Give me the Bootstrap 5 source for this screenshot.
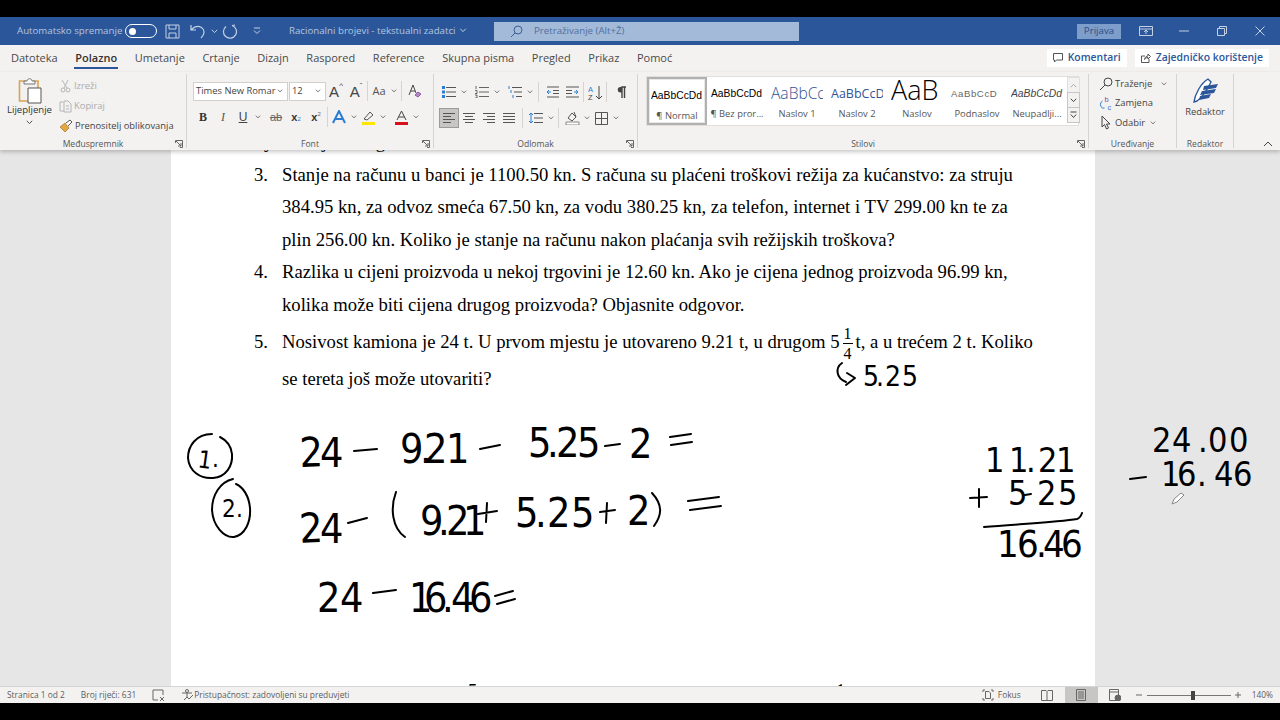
<!DOCTYPE html>
<html lang="hr">
  <head>
    <meta charset="UTF-8" />
    <meta name="viewport" content="width=device-width, initial-scale=1.0" />
    <title>Racionalni brojevi - tekstualni zadatci</title>
    <link
      href="https://cdn.jsdelivr.net/npm/bootstrap@5.3.0/dist/css/bootstrap.min.css"
      rel="stylesheet"
    />
    <style>
      html, body { height: 720px; overflow: hidden; }
      body {
        background: #000;
        font-family: "Open Sans", "Liberation Sans", sans-serif;
        font-size: 10px;
        color: #444;
      }
      svg { display: block; flex: none; }
      .frame { width: 1280px; height: 720px; padding: 17px 0; }

      /* title bar */
      .title-bar { height: 28px; background: #2b579a; color: #b4c5df; font-size: 9.7px; flex: none; white-space: nowrap; }
      .title-bar svg { stroke: #c3d0e5; fill: none; }
      .autosave { margin-left: 17px; width: 108px; }
      .toggle-pill { width: 32px; height: 14px; border: 1px solid #fff; border-radius: 8px; padding: 2px 3px; }
      .toggle-dot { width: 7px; height: 7px; background: #fff; border-radius: 50%; }
      .undo-ico { margin-left: 10px; }
      .doc-name { margin-left: 28px; width: 205px; }
      .search-box { width: 305px; height: 19px; background: #a4bad9; color: #4f6f9e; padding-left: 16px; gap: 11px; }
      .search-box svg { stroke: #3c5f96; }
      .signin { width: 44px; height: 15px; background: #7d9dcb; color: #2b4f86; margin-left: 278px; }
      .win-btn { width: 38px; }
      .win-first { margin-left: 6px; }

      /* tabs */
      .tab-row { height: 27px; background: #f3f2f1; flex: none; font-size: 11px; padding-left: 11px; color: #4a4a4a; }
      .tab-item { margin-right: 17.6px; height: 27px; padding-top: 5px; position: relative; }
      .tab-on { font-weight: 600; color: #333; }
      .tab-on::after { content: ""; position: absolute; left: -1px; right: -1px; top: 22px; height: 2px; background: #2b579a; }
      .share-wrap { margin-right: 11px; }
      .share-btn { height: 18px; background: #fff; color: #2b579a; font-weight: 600; font-size: 10.4px; padding: 0 6px; gap: 5px; }
      .share-btn svg { stroke: #555; fill: none; }

      /* ribbon */
      .ribbon { height: 78px; background: #f3f2f1; flex: none; position: relative; z-index: 2; box-shadow: 0 2px 4px rgba(0,0,0,.22); }
      .rb-group { height: 74px; margin-top: 2px; border-right: 1px solid #d6d4d2; position: relative; }
      .rb-body { height: 65px; }
      .rb-label { height: 11px; line-height: 11px; text-align: center; font-size: 8.6px; color: #555; }
      .launcher { position: absolute; right: 3px; bottom: 0; }
      .g-clip { width: 187px; }
      .g-font { width: 247px; }
      .g-para { width: 204px; }
      .g-style { width: 451px; }
      .g-edit { width: 88px; }
      .g-edit2 { width: 57px; }
      .rb-collapse { position: absolute; right: 7px; bottom: 3px; }
      .rb-btn { height: 20px; width: 20px; display: flex; align-items: center; justify-content: center; flex: none; color: #333; }
      .rb-btn svg { stroke: #555; fill: none; }
      .rb-cv { height: 20px; width: 9px; display: flex; align-items: center; justify-content: center; flex: none; }
      .rb-cv svg { stroke: #555; fill: none; }
      .rb-sep { width: 1px; height: 20px; background: #d6d4d2; flex: none; margin: 0 3px; }
      .rb-sep-tight { margin: 0 1px; }
      .rb-active { background: #c8c6c4; border: 1px solid #9b9b9b; }

      .paste-col { width: 59px; padding-top: 4px; color: #333; font-size: 9.6px; line-height: 12px; }
      .clip-row { height: 20px; gap: 2px; white-space: nowrap; font-size: 9.4px; }
      .clip-off { color: #ababab; }
      .clip-on { color: #444; }
      .clip-col { padding-top: 2px; }

      .font-rows { padding: 7px 0 0 6px; }
      .pick { height: 19px; background: #fff; border: 1px solid #d2d0ce; color: #444; padding-left: 2px; font-size: 9.4px; white-space: nowrap; overflow: hidden; }
      .pick svg { stroke: #555; fill: none; }
      .pick-font { width: 95px; margin-right: 1px; }
      .pick-size { width: 37px; }
      .row-two { margin-top: 6px; }
      .big-bold { font-family: "Liberation Serif", serif; font-weight: 700; font-size: 12px; color: #333; }
      .big-it { font-family: "Liberation Serif", serif; font-style: italic; font-size: 12px; color: #555; }
      .big-un { font-family: "Liberation Sans", sans-serif; font-size: 12px; text-decoration: underline; color: #444; }
      .big-st { font-family: "Liberation Sans", sans-serif; font-size: 11px; text-decoration: line-through; color: #666; }
      .big-sc { font-family: "Liberation Sans", sans-serif; font-weight: 700; font-size: 11px; color: #333; }
      .big-sc sub, .big-sc sup { font-size: 6px; color: #2b7cd3; font-weight: 400; }
      .big-sc sup { color: #666; }
      .big-a { font-family: "Liberation Sans", sans-serif; font-size: 15px; color: #444; line-height: 1; }
      .big-a sup { font-size: 8px; top: -.6em; }
      .big-aa { font-size: 11px; color: #555; }
      .para-rows { padding: 8px 0 0 5px; }

      .gallery-wrap { padding: 2px 0 0 8px; }
      .gallery { width: 433px; height: 50px; background: #fff; border: 1px solid #e1dfdd; }
      .style-item { width: 60px; height: 48px; text-align: center; overflow: hidden; flex: none; }
      .style-first { border: 2px solid #b1b1b1; background: #fff; box-shadow: inset 0 0 0 1px #e8e8e8; }
      .style-prev { height: 30px; line-height: 33px; margin: 0 4px; text-align: left; font-family: "Liberation Sans", sans-serif; font-size: 10.3px; color: #000; white-space: nowrap; overflow: hidden; }
      .style-first .style-prev { margin: 0 2px; }
      .style-name { font-size: 9.4px; line-height: 13px; color: #555; white-space: nowrap; }
      .prev-h1 { font-size: 15.6px; color: #2f5496; font-weight: 300; font-family: "Open Sans", sans-serif; }
      .prev-h2 { font-size: 12.5px; color: #2f5496; font-family: "Open Sans", sans-serif; }
      .prev-t { font-size: 27px; font-family: "Open Sans", sans-serif; font-weight: 300; line-height: 26px; }
      .prev-sub { color: #666; letter-spacing: .6px; font-size: 9.6px; }
      .prev-em { font-style: italic; color: #444; }
      .gal-scroll { width: 13px; height: 48px; flex: none; }
      .gal-btn { height: 16px; border: 1px solid #c8c6c4; background: #f3f2f1; display: flex; align-items: center; justify-content: center; margin-bottom: -1px; }
      .gal-btn svg { stroke: #444; fill: none; }
      .gal-first { border-color: #e1dfdd; }
      .gal-first svg { stroke: #aaa; }

      .edit-col { padding: 0 0 0 9px; font-size: 9.4px; color: #444; }
      .edit-row { height: 19.5px; gap: 1px; white-space: nowrap; }
      .edit-ico { width: 16px; }
      .edit-row svg { fill: none; }
      .edit2-col { padding-top: 3px; color: #444; font-size: 9.4px; line-height: 12px; }
      .edit2-txt { margin-top: 2px; }

      /* document */
      .doc-area { flex: 1 1 auto; min-height: 0; background: #e6e6e6; position: relative; overflow: hidden; }
      .page-sheet {
        width: 924px; height: 640px; margin: -24px 0 0 171px; background: #fff;
        padding-left: 83px; color: #000;
        font-family: "Liberation Serif", serif; font-size: 18.68px; line-height: 32.5px; white-space: nowrap;
      }
      .cut-line { height: 32.5px; padding-left: 10px; word-spacing: 44px; }
      .item-row { display: flex; }
      .item-num { width: 28px; flex: none; }
      .gap-five { margin-top: 2px; }
      .line-five { height: 37px; line-height: 37px; }
      .frac-five { display: inline-flex; flex-direction: column; vertical-align: middle; line-height: 19px; font-size: 16px; text-align: center; margin: -1px 3px 0 3px; }
      .frac-top { border-bottom: 1px solid #000; padding: 0 1px; }
      .ink-layer { position: absolute; left: 0; top: 0; width: 1280px; height: 536px; pointer-events: none; }
      .ink-line { fill: none; stroke: #000; stroke-width: 2; stroke-linecap: round; stroke-linejoin: round; }
      .ink-num { font-family: "Liberation Sans Narrow", "DejaVu Sans Condensed", sans-serif; fill: #000; }
      .ink-big { font-size: 41px; }
      .ink-mid { font-size: 34px; }
      .ink-tall { font-size: 38px; }
      .ink-small { font-size: 28px; }
      .ink-tiny { font-size: 24px; }
      .under-cut { font-family: "Liberation Serif", serif; font-size: 18.6px; fill: #000; }

      /* status bar */
      .status-bar { height: 17px; background: #f3f2f1; border-top: 1px solid #d4d4d4; flex: none; font-size: 8.4px; color: #5c5c5c; position: relative; z-index: 2; white-space: nowrap; }
      .status-bar svg { stroke: #666; fill: none; }
      .st-first { margin-left: 7px; }
      .st-view { width: 33px; height: 16px; display: flex; align-items: center; justify-content: center; flex: none; }
      .st-on { background: #c8c6c4; }
      .st-gap-read { margin-left: 20px; }
      .st-gap-view { margin-left: 12px; }
      .st-gap-web { margin-left: 11px; }
      .st-gap-zoom { margin-left: 15px; }
      .st-gap-pct { margin: 0 7px 0 11px; }
      .zoom-track { width: 84px; height: 1px; background: #777; position: relative; margin: 0 4px 0 5px; }
      .zoom-thumb { position: absolute; left: 44px; top: -4px; width: 4px; height: 9px; background: #444; }
    </style>
  </head>
  <body>
    <svg width="0" height="0" class="position-absolute">
      <defs>
        <symbol id="chv" viewBox="0 0 7 5"><path d="M.8 .8 3.5 3.6 6.2 .8" /></symbol>
        <symbol id="lnch" viewBox="0 0 8 8"><path d="M.5 3V.5H7.5V7.5H5M1 1l5 5M6 3v3H3" /></symbol>
        <symbol id="txtl" viewBox="0 0 14 12"><path d="M1 1.5H13M1 4.5H9M1 7.5H13M1 10.5H9" /></symbol>
        <symbol id="txtc" viewBox="0 0 14 12"><path d="M1 1.5H13M3 4.5H11M1 7.5H13M3 10.5H11" /></symbol>
        <symbol id="txtr" viewBox="0 0 14 12"><path d="M1 1.5H13M5 4.5H13M1 7.5H13M5 10.5H13" /></symbol>
        <symbol id="txtj" viewBox="0 0 14 12"><path d="M1 1.5H13M1 4.5H13M1 7.5H13M1 10.5H13" /></symbol>
      </defs>
    </svg>

    <div class="frame d-flex flex-column">
      <!-- naslovna traka -->
      <div class="title-bar d-flex align-items-center">
        <div class="autosave">Automatsko spremanje</div>
        <div class="toggle-pill d-flex align-items-center"><div class="toggle-dot"></div></div>
        <svg class="ms-2" width="15" height="15" viewBox="0 0 15 15"><path d="M1 1H14V14H1ZM4 1V5H11V1M4 14V9H11V14" /></svg>
        <svg class="undo-ico" width="17" height="15" viewBox="0 0 17 15"><path d="M1 1V6H6M1.5 5.5C4 3 8 1.5 11.5 3.5 15 6 15 10 11 14" stroke-width="1.2" /></svg>
        <svg class="ms-1" width="7" height="5"><use href="#chv" /></svg>
        <svg class="ms-1" width="15" height="15" viewBox="0 0 15 15"><path d="M10 1.5A6.5 6.5 0 1 1 4 2.5M10 1.5 13 1" stroke-width="1.2" /></svg>
        <svg class="ms-3" width="8" height="8" viewBox="0 0 8 8"><path d="M1 1H7M1 3.5 4 6.5 7 3.5" /></svg>
        <div class="doc-name d-flex align-items-center gap-1">Racionalni brojevi - tekstualni zadatci
          <svg width="8" height="5"><use href="#chv" /></svg></div>
        <div class="search-box d-flex align-items-center">
          <svg width="13" height="13" viewBox="0 0 13 13"><circle cx="8" cy="5" r="4" /><path d="M5 8 1 12" /></svg>
          <span>Pretraživanje (Alt+Ž)</span>
        </div>
        <div class="signin d-flex align-items-center justify-content-center">Prijava</div>
        <div class="win-btn win-first d-flex justify-content-center"><svg width="14" height="10" viewBox="0 0 14 10"><path d="M.5 .5H13.5V9.5H.5ZM.5 3H13.5M7 8V4M5 6 7 4 9 6" /></svg></div>
        <div class="win-btn d-flex justify-content-center"><svg width="10" height="2"><path d="M0 1H10" /></svg></div>
        <div class="win-btn d-flex justify-content-center"><svg width="10" height="10" viewBox="0 0 10 10"><path d="M.5 2.5H7.5V9.5H.5ZM2.5 2.5V.5H9.5V7.5H7.5" /></svg></div>
        <div class="win-btn d-flex justify-content-center"><svg width="10" height="10" viewBox="0 0 10 10"><path d="M.5 .5 9.5 9.5M9.5 .5 .5 9.5" /></svg></div>
      </div>

      <!-- kartice -->
      <div class="tab-row d-flex align-items-start">
        <div class="tab-item">Datoteka</div>
        <div class="tab-item tab-on">Polazno</div>
        <div class="tab-item">Umetanje</div>
        <div class="tab-item">Crtanje</div>
        <div class="tab-item">Dizajn</div>
        <div class="tab-item">Raspored</div>
        <div class="tab-item">Reference</div>
        <div class="tab-item">Skupna pisma</div>
        <div class="tab-item">Pregled</div>
        <div class="tab-item">Prikaz</div>
        <div class="tab-item">Pomoć</div>
        <div class="ms-auto d-flex gap-2 align-items-center share-wrap mt-1">
          <div class="share-btn d-flex align-items-center">
            <svg width="10" height="10" viewBox="0 0 10 10"><path d="M.5 .5H9.5V7H3.5L1.5 9V7H.5Z" /></svg>Komentari
          </div>
          <div class="share-btn d-flex align-items-center">
            <svg width="10" height="10" viewBox="0 0 10 10"><path d="M4 3H.5V9.5H8V6M3.5 6.5C4 4 5.5 3 7 3V1L9.5 3.5 7 6V4.5C5.5 4.5 4.5 5 3.5 6.5" /></svg>Zajedničko korištenje
          </div>
        </div>
      </div>

      <!-- vrpca -->
      <div class="ribbon d-flex align-items-start">
        <div class="rb-group g-clip">
          <div class="rb-body d-flex">
            <div class="paste-col d-flex flex-column align-items-center">
              <svg width="24" height="26" viewBox="0 0 24 26">
                <path d="M8 3H1.5V23H11" fill="none" stroke="#d7a354" stroke-width="1.6" />
                <path d="M15 3H20V10" fill="none" stroke="#d7a354" stroke-width="1.6" />
                <path d="M6 6V3H9C9 0 14 0 14 3H17V6Z" fill="#f8f8f8" stroke="#777" />
                <path d="M10 10H23V25H10Z" fill="#fff" stroke="#555" />
              </svg>
              <div>Lijepljenje</div>
              <svg class="mt-1" width="7" height="5" stroke="#555" fill="none"><use href="#chv" /></svg>
            </div>
            <div class="clip-col d-flex flex-column">
              <div class="clip-row clip-off d-flex align-items-center">
                <svg width="13" height="14" viewBox="0 0 13 14" stroke="#b5b5b5" fill="none"><path d="M3 1 8 9M9 1 5 9" /><circle cx="4" cy="11" r="2" /><circle cx="9" cy="11" r="2" /></svg>Izreži
              </div>
              <div class="clip-row clip-off d-flex align-items-center">
                <svg width="13" height="14" viewBox="0 0 13 14" stroke="#b5b5b5" fill="none"><path d="M4 3H1V12H5M5 2H9L12 5V13H5ZM7 7H10M7 10H10" /></svg>Kopiraj
              </div>
              <div class="clip-row clip-on d-flex align-items-center">
                <svg width="14" height="14" viewBox="0 0 14 14"><path d="M1 8 6 4 10 9 6 13Z" fill="#e0a83e" stroke="#a5762a" stroke-width=".7" /><path d="M7 4 11 1 13 3 9 7" fill="#fff" stroke="#555" /></svg>Prenositelj oblikovanja
              </div>
            </div>
          </div>
          <div class="rb-label">Međuspremnik</div>
          <svg class="launcher" width="8" height="8" stroke="#666" fill="none"><use href="#lnch" /></svg>
        </div>

        <div class="rb-group g-font">
          <div class="rb-body font-rows">
            <div class="d-flex align-items-center">
              <div class="pick pick-font d-flex align-items-center justify-content-between">Times New Romar<svg class="me-1" width="6" height="4"><use href="#chv" /></svg></div>
              <div class="pick pick-size d-flex align-items-center justify-content-between">12<svg class="me-1" width="6" height="4"><use href="#chv" /></svg></div>
              <div class="rb-btn big-a">A<sup>^</sup></div>
              <div class="rb-btn big-a">A<sup>ˇ</sup></div>
              <div class="rb-sep rb-sep-tight"></div>
              <div class="rb-btn big-aa">Aa</div>
              <div class="rb-cv"><svg width="6" height="4"><use href="#chv" /></svg></div>
              <div class="rb-sep"></div>
              <div class="rb-btn"><svg width="14" height="14" viewBox="0 0 14 14"><path d="M1 11 5 1 8 9M2.500 7H7" stroke="#444" /><path d="M7 11 10 8 13 10 10 13Z" fill="#b489c5" stroke="#8a5aa3" /></svg></div>
            </div>
            <div class="d-flex align-items-center row-two">
              <div class="rb-btn big-bold">B</div>
              <div class="rb-btn big-it">I</div>
              <div class="rb-btn big-un">U</div>
              <div class="rb-cv"><svg width="6" height="4"><use href="#chv" /></svg></div>
              <div class="rb-btn big-st ms-1">ab</div>
              <div class="rb-btn big-sc">x<sub>2</sub></div>
              <div class="rb-btn big-sc">x<sup>2</sup></div>
              <div class="rb-sep rb-sep-tight"></div>
              <div class="rb-btn"><svg width="14" height="14" viewBox="0 0 14 14"><path d="M1 13 7 1 13 13M3.500 9H10.500" stroke="#2b7cd3" stroke-width="2" /></svg></div>
              <div class="rb-cv"><svg width="6" height="4"><use href="#chv" /></svg></div>
              <div class="rb-btn"><svg width="15" height="15" viewBox="0 0 15 15"><path d="M3 9 9 2 12 5 6 10Z" stroke="#555" /><path d="M1 12H14V15H1Z" fill="#ffe600" stroke="none" /></svg></div>
              <div class="rb-cv"><svg width="6" height="4"><use href="#chv" /></svg></div>
              <div class="rb-btn ms-1"><svg width="15" height="15" viewBox="0 0 15 15"><path d="M3 10 7.500 1 12 10M4.500 7H10.500" stroke="#444" /><path d="M1 12H14V15H1Z" fill="#d6111a" stroke="none" /></svg></div>
              <div class="rb-cv"><svg width="6" height="4"><use href="#chv" /></svg></div>
            </div>
          </div>
          <div class="rb-label">Font</div>
          <svg class="launcher" width="8" height="8" stroke="#666" fill="none"><use href="#lnch" /></svg>
        </div>

        <div class="rb-group g-para">
          <div class="rb-body para-rows">
            <div class="d-flex align-items-center">
              <div class="rb-btn"><svg width="14" height="12" viewBox="0 0 14 12"><path d="M4 1.500H14M4 6H14M4 10.500H14" /><path d="M0 0H3V3H0ZM0 4.500H3V7.500H0ZM0 9H3V12H0Z" fill="#2b7cd3" stroke="none" /></svg></div>
              <div class="rb-cv"><svg width="6" height="4"><use href="#chv" /></svg></div>
              <div class="rb-btn ms-1"><svg width="14" height="12" viewBox="0 0 14 12"><path d="M4 1.500H14M4 6H14M4 10.500H14M1 0V3M0 4.500H2V7.500H0M0 9H2V12H0" stroke-width=".9" /></svg></div>
              <div class="rb-cv"><svg width="6" height="4"><use href="#chv" /></svg></div>
              <div class="rb-btn ms-1"><svg width="14" height="12" viewBox="0 0 14 12"><path d="M4 1.500H14M6 6H14M8 10.500H14" /><path d="M1 0V3M3 4V7M5 9V12" stroke="#2b7cd3" /></svg></div>
              <div class="rb-cv"><svg width="6" height="4"><use href="#chv" /></svg></div>
              <div class="rb-sep ms-1"></div>
              <div class="rb-btn"><svg width="13" height="12" viewBox="0 0 13 12"><path d="M1 1H13M7 4.500H13M7 7.500H13M1 11H13" /><path d="M5 6H1M3 4 1 6 3 8" stroke="#2b7cd3" /></svg></div>
              <div class="rb-btn"><svg width="13" height="12" viewBox="0 0 13 12"><path d="M0 1H13M0 4.500H6M0 7.500H6M0 11H13" /><path d="M8 6H12M10 4 12 6 10 8" stroke="#2b7cd3" /></svg></div>
              <div class="rb-sep rb-sep-tight"></div>
              <div class="rb-btn"><svg width="15" height="15" viewBox="0 0 15 15"><text x="0" y="7" font-size="7.500" font-family="Liberation Sans" fill="#2b7cd3" stroke="none">A</text><text x="0" y="14.500" font-size="7.500" font-family="Liberation Sans" fill="#444" stroke="none">Z</text><path d="M11 1V14M8 11 11 14 14 11" stroke="#444" /></svg></div>
              <div class="rb-sep rb-sep-tight"></div>
              <div class="rb-btn ms-1"><svg width="10" height="13" viewBox="0 0 10 13"><path d="M5 12V1H9M7.500 1V12" stroke="#444" stroke-width="1.400" /><path d="M5 1H3.500A2.500 2.500 0 0 0 3.500 6.500H5Z" fill="#444" stroke="none" /></svg></div>
            </div>
            <div class="d-flex align-items-center row-two">
              <div class="rb-btn rb-active"><svg width="14" height="12"><use href="#txtl" /></svg></div>
              <div class="rb-btn"><svg width="14" height="12"><use href="#txtc" /></svg></div>
              <div class="rb-btn"><svg width="14" height="12"><use href="#txtr" /></svg></div>
              <div class="rb-btn"><svg width="14" height="12"><use href="#txtj" /></svg></div>
              <div class="rb-sep"></div>
              <div class="rb-btn"><svg width="14" height="12" viewBox="0 0 14 12"><path d="M5 1.500H14M5 6H14M5 10.500H14" /><path d="M2 1V11M0 3 2 1 4 3M0 9 2 11 4 9" stroke="#2b7cd3" /></svg></div>
              <div class="rb-cv"><svg width="6" height="4"><use href="#chv" /></svg></div>
              <div class="rb-sep"></div>
              <div class="rb-btn"><svg width="15" height="14" viewBox="0 0 15 14"><path d="M3 7 7 2 11 6 7 10Z" /><path d="M9 1 11 6" /><path d="M1 11H14V14H1Z" fill="#fff" stroke="#888" /></svg></div>
              <div class="rb-cv"><svg width="6" height="4"><use href="#chv" /></svg></div>
              <div class="rb-btn"><svg width="13" height="13" viewBox="0 0 13 13"><path d="M.5 .5H12.500V12.500H.5ZM6.500 .5V12.500M.5 6.500H12.500" /></svg></div>
              <div class="rb-cv"><svg width="6" height="4"><use href="#chv" /></svg></div>
            </div>
          </div>
          <div class="rb-label">Odlomak</div>
          <svg class="launcher" width="8" height="8" stroke="#666" fill="none"><use href="#lnch" /></svg>
        </div>

        <div class="rb-group g-style">
          <div class="rb-body gallery-wrap">
            <div class="gallery d-flex">
              <div class="style-item style-first"><div class="style-prev">AaBbCcDd</div><div class="style-name">¶ Normal</div></div>
              <div class="style-item"><div class="style-prev">AaBbCcDd</div><div class="style-name">¶ Bez pror...</div></div>
              <div class="style-item"><div class="style-prev prev-h1">AaBbCcDd</div><div class="style-name">Naslov 1</div></div>
              <div class="style-item"><div class="style-prev prev-h2">AaBbCcDd</div><div class="style-name">Naslov 2</div></div>
              <div class="style-item"><div class="style-prev prev-t">AaB</div><div class="style-name">Naslov</div></div>
              <div class="style-item"><div class="style-prev prev-sub">AaBbCcD</div><div class="style-name">Podnaslov</div></div>
              <div class="style-item"><div class="style-prev prev-em">AaBbCcDd</div><div class="style-name">Neupadlji...</div></div>
              <div class="gal-scroll ms-auto">
                <div class="gal-btn gal-first"><svg width="7" height="5" viewBox="0 0 7 5"><path d="M.8 4.200 3.500 1.400 6.200 4.200" /></svg></div>
                <div class="gal-btn"><svg width="7" height="5"><use href="#chv" /></svg></div>
                <div class="gal-btn"><svg width="7" height="8" viewBox="0 0 7 8"><path d="M.5 1H6.500M.8 3.500 3.500 6.500 6.200 3.500" /></svg></div>
              </div>
            </div>
          </div>
          <div class="rb-label">Stilovi</div>
          <svg class="launcher" width="8" height="8" stroke="#666" fill="none"><use href="#lnch" /></svg>
        </div>

        <div class="rb-group g-edit">
          <div class="rb-body edit-col">
            <div class="edit-row d-flex align-items-center">
              <svg class="edit-ico" width="14" height="14" viewBox="0 0 14 14" stroke="#444"><circle cx="9" cy="5" r="4" /><path d="M6 8 1 13" /></svg>Traženje
              <svg class="ms-2" width="6" height="4" stroke="#555"><use href="#chv" /></svg>
            </div>
            <div class="edit-row d-flex align-items-center">
              <svg class="edit-ico" width="15" height="15" viewBox="0 0 15 15"><path d="M4 5A4 4 0 0 0 4 12H6" stroke="#2b7cd3" /><text x="6" y="6" font-size="7.500" font-family="Liberation Sans" fill="#8a4fa5">b</text><text x="9" y="14" font-size="7.500" font-family="Liberation Sans" fill="#2b7cd3">c</text></svg>Zamjena
            </div>
            <div class="edit-row d-flex align-items-center">
              <svg class="edit-ico" width="14" height="15" viewBox="0 0 14 15" stroke="#444"><path d="M3 1V12L5.500 9.500 7.500 14 9.500 13 7.500 9H11Z" /></svg>Odabir
              <svg class="ms-1" width="6" height="4" stroke="#555"><use href="#chv" /></svg>
            </div>
          </div>
          <div class="rb-label">Uređivanje</div>
        </div>

        <div class="rb-group g-edit2">
          <div class="rb-body edit2-col d-flex flex-column align-items-center">
            <svg width="27" height="27" viewBox="0 0 27 27">
              <path d="M2 25C3 17 9 6 16 2L19 5C16 11 11 20 5 24Z" fill="#fff" stroke="#2b579a" stroke-width="1.400" />
              <path d="M12 9 26 7 24 11 11 13ZM10 14 24 12 22 16 8 18ZM8 19 19 17 17 21 7 23Z" fill="#2b579a" />
            </svg>
            <div class="edit2-txt">Redaktor</div>
          </div>
          <div class="rb-label">Redaktor</div>
        </div>
        <svg class="rb-collapse" width="10" height="6" viewBox="0 0 10 6" fill="none" stroke="#444"><path d="M1 5 5 1 9 5" /></svg>
      </div>

      <!-- dokument -->
      <main class="doc-area">
        <div class="page-sheet">
          <div class="cut-line">y j g</div>
          <div class="item-row">
            <div class="item-num">3.</div>
            <div>Stanje na računu u banci je 1100.50 kn. S računa su plaćeni troškovi režija za kućanstvo: za struju<br />384.95 kn, za odvoz smeća 67.50 kn, za vodu 380.25 kn, za telefon, internet i TV 299.00 kn te za<br />plin 256.00 kn. Koliko je stanje na računu nakon plaćanja svih režijskih troškova?</div>
          </div>
          <div class="item-row">
            <div class="item-num">4.</div>
            <div>Razlika u cijeni proizvoda u nekoj trgovini je 12.60 kn. Ako je cijena jednog proizvoda 96.99 kn,<br />kolika može biti cijena drugog proizvoda? Objasnite odgovor.</div>
          </div>
          <div class="item-row gap-five">
            <div class="item-num line-five">5.</div>
            <div>
              <div class="line-five">Nosivost kamiona je 24 t. U prvom mjestu je utovareno 9.21 t, u drugom 5<span class="frac-five"><span class="frac-top">1</span><span>4</span></span>t, a u trećem 2 t. Koliko</div>
              <div class="line-five">se tereta još može utovariti?</div>
            </div>
          </div>
        </div>

        <!-- rukom pisano po dokumentu -->
        <svg class="ink-layer" viewBox="0 150 1280 536">
          <g class="ink-num ink-small">
            <text x="863 876 885 902" y="386">5.25</text>
          </g>
          <path class="ink-line" d="M842 363C835 368 836 378 846 382M847 373 855 378 846 385" />

          <path class="ink-line" d="M212 434C196 434 188 446 188 458 189 471 200 479 213 478 226 477 233 466 232 454 231 445 226 440 220 437" />
          <g class="ink-num ink-tiny">
            <text x="197 212" y="467" rotate="8 0">1.</text>
            <text x="222 236" y="517">2.</text>
          </g>
          <path class="ink-line" d="M233 479C220 482 212 495 212 510 213 526 224 538 234 537 245 535 251 522 250 508 249 496 243 487 236 484" />

          <g class="ink-num ink-big">
            <text x="300 320" y="467" rotate="-2 0">24</text>
            <text x="400 420 424 446" y="463">9.21</text>
            <text x="528 547 556 577" y="457">5.25</text>
            <text x="629" y="458">2</text>
            <text x="300 320" y="543" rotate="-3 0">24</text>
            <text x="420 438 446 463" y="535">9.21</text>
            <text x="515 535 547 571" y="527">5.25</text>
            <text x="627" y="525">2</text>
            <text x="317 340" y="612">24</text>
            <text x="409 424 442 451 469" y="612">16.46</text>
          </g>
          <path class="ink-line" d="M354 451 377 449M480 449 500 445M605 446 620 444M670 437 691 434M671 445 692 442M348 523 367 518M396 492C390 508 392 528 405 537M478 514 497 511M487 503 486 522M600 512 615 510M607 503 606 523M652 493C663 505 662 515 654 526M688 501 719 497M690 510 721 506M373 593 396 590M495 596 513 591M497 604 515 599" />

          <g class="ink-num ink-mid">
            <text x="985 1009 1026 1038 1056" y="472">11.21</text>
            <text x="1008 1037 1058" y="505">525</text>
            <text x="1152 1172 1198 1208 1229" y="452">24.00</text>
            <text x="1161 1177 1197 1214 1233" y="486">16.46</text>
          </g>
          <g class="ink-num ink-tall">
            <text x="997 1017 1036 1043 1061" y="557">16.46</text>
          </g>
          <path class="ink-line" d="M970 498 987 497M979 489 979 507M1025 495 1031 494M984 527C1020 524 1060 522 1077 519 1080 518 1081 516 1082 513M1130 479 1146 477" />
          <path d="M1172 504 1174 499 1181 493 1184 495 1177 502Z" fill="#fff" stroke="#888" />

          <!-- vrh sljedećeg retka, odrezan statusnom trakom -->
          <text class="under-cut" x="468" y="697">5</text>
          <text class="under-cut" x="836" y="697">1</text>
        </svg>
      </main>

      <!-- statusna traka -->
      <footer class="status-bar d-flex align-items-center">
        <span class="st-first">Stranica 1 od 2</span>
        <span class="ms-3">Broj riječi: 631</span>
        <svg class="ms-3" width="13" height="12" viewBox="0 0 13 12"><path d="M7 1H1V11H6M7 1H11V6M8 8 12 12M12 8 8 12" /></svg>
        <svg class="ms-3" width="13" height="12" viewBox="0 0 13 12"><circle cx="6" cy="2" r="1.500" /><path d="M1 4H11M6 4V8L3 11M6 8 8 10 12 6" /></svg>
        <span>Pristupačnost: zadovoljeni su preduvjeti</span>
        <div class="ms-auto d-flex align-items-center">
          <svg width="12" height="12" viewBox="0 0 12 12"><path d="M1 3V1H3M9 1H11V3M1 9V11H3M9 11H11V9M3.500 2.500H7L8.500 4V9.500H3.500Z" /></svg>
          <span class="ms-1">Fokus</span>
          <svg class="st-gap-read" width="12" height="11" viewBox="0 0 12 11"><path d="M.5 .5H5L6 1.500 7 .5H11.500V10.500H.5ZM6 1.500V10.500" /></svg>
          <div class="st-view st-on st-gap-view"><svg width="10" height="12" viewBox="0 0 10 12"><path d="M.5 .5H9.500V11.500H.5ZM2 3H8M2 5H8M2 7H8M2 9H8" /></svg></div>
          <svg class="st-gap-web" width="12" height="12" viewBox="0 0 12 12"><path d="M.5 .5H9.500V7M7 11.500H.5V.5M.5 3H9.500" /><circle cx="9" cy="9" r="3" fill="#666" /></svg>
          <svg class="st-gap-zoom" width="6" height="2"><path d="M0 1H6" /></svg>
          <div class="zoom-track"><div class="zoom-thumb"></div></div>
          <svg width="6" height="6"><path d="M0 3H6M3 0V6" /></svg>
          <span class="st-gap-pct">140%</span>
        </div>
      </footer>
    </div>

    <script src="https://cdn.jsdelivr.net/npm/bootstrap@5.3.0/dist/js/bootstrap.bundle.min.js"></script>
  </body>
</html>
